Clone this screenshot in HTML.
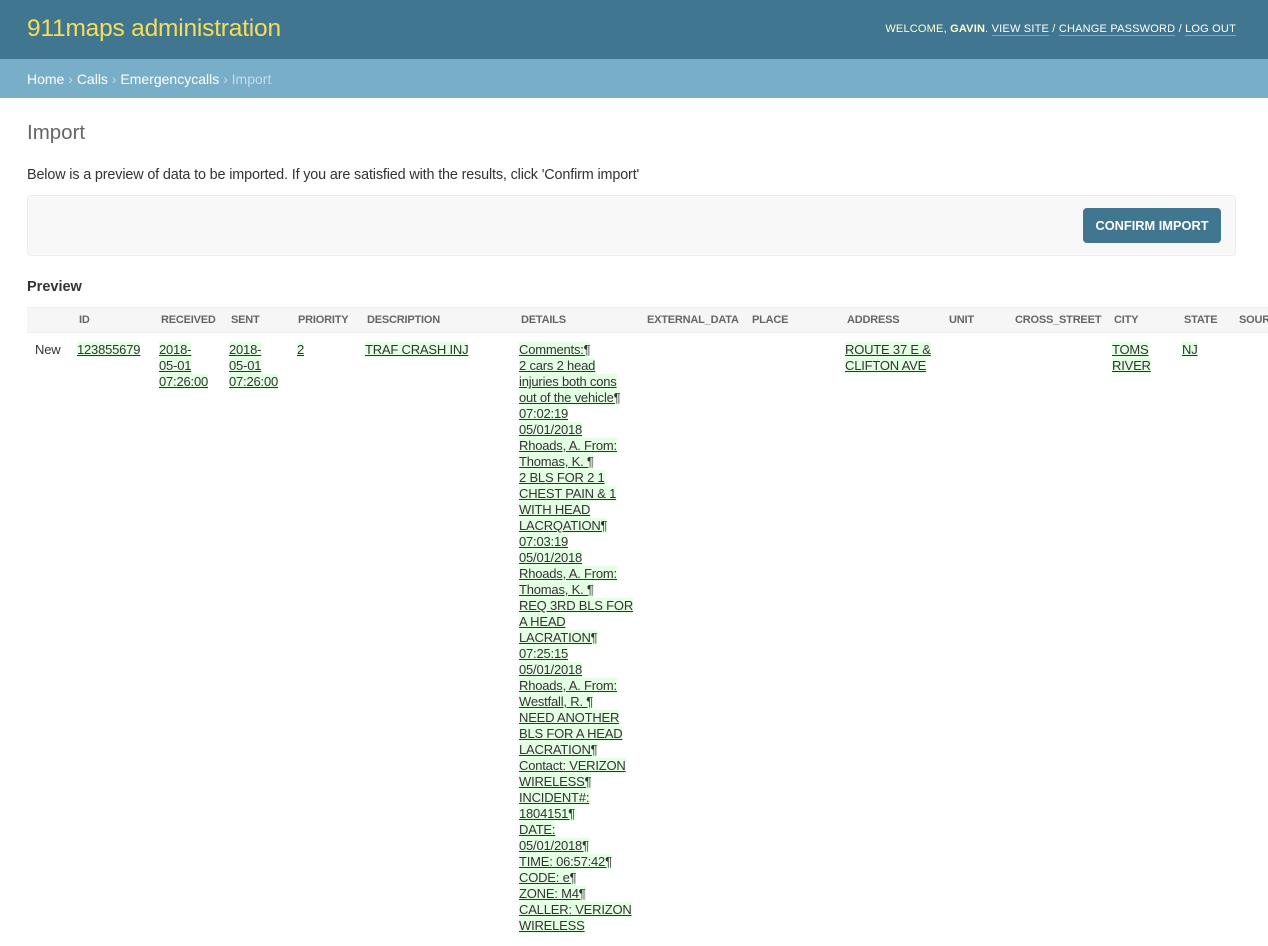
<!DOCTYPE html>
<html><head><meta charset="utf-8"><style>
*{margin:0;padding:0;box-sizing:border-box}
body{width:1268px;height:946px;overflow:hidden;background:#fff;font-family:"Liberation Sans",sans-serif;color:#333;position:relative}
.hdr{position:absolute;left:0;top:0;width:1268px;height:59px;background:#417690}
.brand{position:absolute;left:27px;top:15px;font-size:24.5px;color:#f5dd5d;letter-spacing:-0.2px}
.tools{position:absolute;right:32px;top:23px;font-size:11px;color:#ffc;letter-spacing:0.2px}
.tools a{color:#fff;text-decoration:none;border-bottom:1px solid rgba(255,255,255,.35)}
.bc{position:absolute;left:0;top:59px;width:1268px;height:39px;background:#79aec8;color:#c4dce8;font-size:14px;padding:12px 27px}
.bc a{color:#fff;text-decoration:none}
h1{position:absolute;left:27px;top:121px;font-size:20.5px;font-weight:300;color:#666}
.p{position:absolute;left:27px;top:167px;font-size:14.4px;white-space:nowrap;letter-spacing:-0.15px}
.box{position:absolute;left:27px;top:195px;width:1209px;height:61px;background:#f8f8f8;border:1px solid #eee;border-radius:4px}
.btn{position:absolute;left:1083px;top:208px;width:138px;height:35px;background:#417690;border-radius:4px;color:#fff;font-size:12.8px;font-weight:bold;text-align:center;line-height:35px}
h2{position:absolute;left:27px;top:279px;font-size:14.5px;font-weight:bold;color:#333}
.th{position:absolute;left:27px;top:307px;width:1241px;height:26px;background:#f6f6f6;border-top:1px solid #eee;border-bottom:1px solid #eee}
.c{position:absolute;font-size:11px;white-space:nowrap}
.h{top:314px;color:#666;font-weight:bold;font-size:11px;letter-spacing:-0.2px}
.d{top:342px;font-size:13px;line-height:16px;letter-spacing:-0.2px}
.d span{background:#e5ffe5;text-decoration:underline;color:#333}
</style></head><body>
<div class="hdr"><div class="brand">911maps administration</div>
<div class="tools">WELCOME, <b>GAVIN</b>. <a>VIEW SITE</a> / <a>CHANGE PASSWORD</a> / <a>LOG OUT</a></div></div>
<div class="bc"><a>Home</a> › <a>Calls</a> › <a>Emergencycalls</a> › Import</div>
<h1>Import</h1>
<div class="p">Below is a preview of data to be imported. If you are satisfied with the results, click 'Confirm import'</div>
<div class="box"></div>
<div class="btn">CONFIRM IMPORT</div>
<h2>Preview</h2>
<div class="th"></div>
<div class="c h" style="left:79px">ID</div>
<div class="c h" style="left:161px">RECEIVED</div>
<div class="c h" style="left:231px">SENT</div>
<div class="c h" style="left:298px">PRIORITY</div>
<div class="c h" style="left:367px">DESCRIPTION</div>
<div class="c h" style="left:521px">DETAILS</div>
<div class="c h" style="left:647px">EXTERNAL_DATA</div>
<div class="c h" style="left:752px">PLACE</div>
<div class="c h" style="left:847px">ADDRESS</div>
<div class="c h" style="left:949px">UNIT</div>
<div class="c h" style="left:1015px">CROSS_STREET</div>
<div class="c h" style="left:1114px">CITY</div>
<div class="c h" style="left:1184px">STATE</div>
<div class="c h" style="left:1239px">SOUR</div>
<div class="c d" style="left:35px">New</div>
<div class="c d" style="left:77px"><span>123855679</span></div>
<div class="c d" style="left:159px"><span>2018-</span><br><span>05-01</span><br><span>07:26:00</span></div>
<div class="c d" style="left:229px"><span>2018-</span><br><span>05-01</span><br><span>07:26:00</span></div>
<div class="c d" style="left:297px"><span>2</span></div>
<div class="c d" style="left:365px"><span>TRAF CRASH INJ</span></div>
<div class="c d" style="left:519px"><span>Comments:¶</span><br><span>2 cars 2 head</span><br><span>injuries both cons</span><br><span>out of the vehicle¶</span><br><span>07:02:19</span><br><span>05/01/2018</span><br><span>Rhoads, A. From:</span><br><span>Thomas, K. ¶</span><br><span>2 BLS FOR 2 1</span><br><span>CHEST PAIN &amp; 1</span><br><span>WITH HEAD</span><br><span>LACRQATION¶</span><br><span>07:03:19</span><br><span>05/01/2018</span><br><span>Rhoads, A. From:</span><br><span>Thomas, K. ¶</span><br><span>REQ 3RD BLS FOR</span><br><span>A HEAD</span><br><span>LACRATION¶</span><br><span>07:25:15</span><br><span>05/01/2018</span><br><span>Rhoads, A. From:</span><br><span>Westfall, R. ¶</span><br><span>NEED ANOTHER</span><br><span>BLS FOR A HEAD</span><br><span>LACRATION¶</span><br><span>Contact: VERIZON</span><br><span>WIRELESS¶</span><br><span>INCIDENT#:</span><br><span>1804151¶</span><br><span>DATE:</span><br><span>05/01/2018¶</span><br><span>TIME: 06:57:42¶</span><br><span>CODE: e¶</span><br><span>ZONE: M4¶</span><br><span>CALLER: VERIZON</span><br><span>WIRELESS</span></div>
<div class="c d" style="left:845px"><span>ROUTE 37 E &amp;</span><br><span>CLIFTON AVE</span></div>
<div class="c d" style="left:1112px"><span>TOMS</span><br><span>RIVER</span></div>
<div class="c d" style="left:1182px"><span>NJ</span></div>
</body></html>
